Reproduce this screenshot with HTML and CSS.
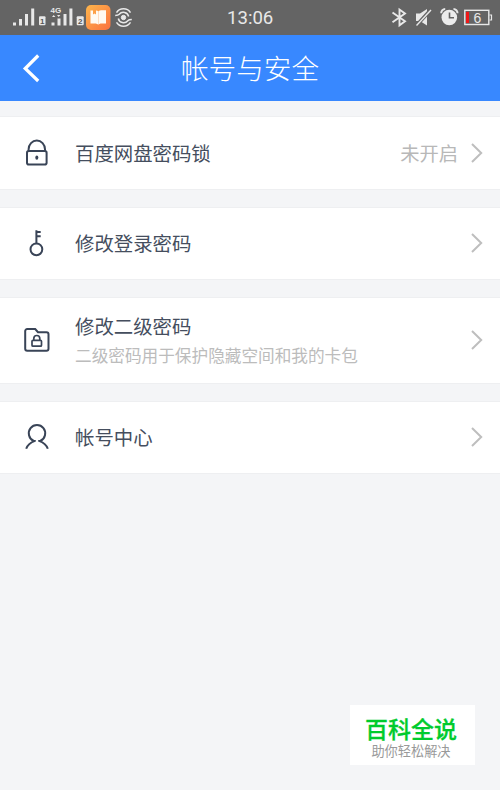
FILE: index.html
```html
<!DOCTYPE html>
<html lang="zh-CN">
<head>
<meta charset="utf-8">
<title>帐号与安全</title>
<link rel="stylesheet" href="styles.css">
</head>
<body>
<div class="status">
  <svg class="status-left" width="140" height="35" viewBox="0 0 140 35">
    <g fill="#e8e8e8">
      <rect x="13" y="22.5" width="3" height="3"/><rect x="19" y="19" width="3" height="6.5"/><rect x="25" y="14" width="3" height="11.5"/><rect x="31.2" y="8.5" width="3" height="17"/>
      <rect x="39" y="16.3" width="6.5" height="9" rx="1"/>
      <rect x="51.5" y="22.5" width="3" height="3"/><rect x="57.5" y="18.5" width="3" height="7"/><rect x="63.5" y="14" width="3" height="11.5"/><rect x="69.4" y="8.5" width="3" height="17"/>
      <rect x="76.7" y="16.3" width="7" height="9" rx="1"/>
      <path d="M52 17l1.7-2 1.7 2zM57 15h3.4l-1.7 2z"/>
    </g>
    <text class="net" x="50.5" y="12.8">4G</text>
    <text class="sim" x="40" y="24">1</text><text class="sim" x="78" y="24">2</text>
    <defs><linearGradient id="orange" x2="1" y2="1"><stop stop-color="#fdb64c"/><stop offset="1" stop-color="#fb713e"/></linearGradient></defs>
    <rect x="86" y="5" width="24.5" height="25" rx="5" fill="url(#orange)"/>
    <path d="M90.500 10.500h2.500v4l1.500-1 1.500 1v-4q1.600 0 2.400 1 1-1.200 3-1.200h4.600v13.200h-5.500l-2.300 1-2.300-1h-5.400z" fill="#fffaf2"/>
    <path d="M98.500 11.500v12.500" stroke="#fdc7a0" stroke-width=".6"/>
    <g fill="none" stroke="#e8e8e8" stroke-width="1.500">
      <circle cx="123.500" cy="17.500" r="2.200" fill="#e8e8e8" stroke-width="1"/>
      <path d="M116.500 12.700a8.300 8.300 0 0 1 14 0M116.500 22.300a8.300 8.300 0 0 0 14 0M115.200 15.500q3 0 4-1.200a5.400 5.400 0 0 1 9.500 2.200M131.800 19.500q-3 0-4 1.200a5.400 5.400 0 0 1-9.500-2.200"/>
    </g>
  </svg>
  <time class="clock">13:06</time>
  <svg class="status-right" width="120" height="35" viewBox="380 0 120 35">
    <path d="M392.500 12.500l12.500 8.800-5.500 4V9.500l5.500 4-12.500 8.800" fill="none" stroke="#e8e8e8" stroke-width="1.900"/>
    <path d="M416 13.500h4l7-4.500v16.500l-7-4.500h-4z" fill="#e8e8e8"/>
    <path d="M416 26l14.500-16" stroke="#646464" stroke-width="3.500"/>
    <path d="M416.500 25.500L431 10" stroke="#e8e8e8" stroke-width="1.400"/>
    <circle cx="449.300" cy="17.500" r="7.800" fill="#ececec"/>
    <path d="M441.200 13.200a4 4 0 0 1 4-4.100M453.500 9.100a4 4 0 0 1 4 4.100" fill="none" stroke="#e8e8e8" stroke-width="2"/>
    <path d="M449.500 12.500v5.300h4.500" fill="none" stroke="#646464" stroke-width="1.600"/>
    <rect x="464.800" y="10.300" width="24" height="14.200" fill="none" stroke="#e8e8e8" stroke-width="1.400"/>
    <path d="M489.500 15h2v5h-2" fill="none" stroke="#e8e8e8" stroke-width="1.200"/>
    <path d="M466 11.800h3V23h-3z" fill="#f01818"/>
    <text class="charge" x="473.500" y="22.700">6</text>
  </svg>
</div>
<header class="header">
  <svg class="back" width="20" height="30" viewBox="0 0 20 30"><path d="M17.200 2.500L4.200 15.500l13 12.500" fill="none" stroke="#fff" stroke-width="3.200"/></svg>
  <h1 class="title">帐号与安全</h1>
</header>
<main class="list">
  <section class="row">
    <svg class="icon" width="28" height="30" viewBox="0 0 28 30"><g fill="none" stroke="#394457" stroke-width="2"><rect x="4" y="13" width="19.600" height="13.500" rx="1.800"/><path d="M5.600 13v-1.700a8.200 8.800 0 0 1 16.400 0V13"/></g><ellipse cx="13.800" cy="19.600" rx="1.500" ry="2.200" fill="#394457"/></svg>
    <div class="label">百度网盘密码锁</div>
    <span class="state">未开启</span>
    <svg class="arrow" width="12" height="22" viewBox="0 0 12 22"><path d="M1 2l9.200 9L1 20"/></svg>
  </section>
  <section class="row">
    <svg class="icon" width="28" height="30" viewBox="0 0 28 30"><g fill="none" stroke="#394457" stroke-width="2"><circle cx="13.400" cy="21.300" r="5.900"/><path d="M13.400 15.400V2.300M13.400 4.100h4.300M13.400 8.300h4.300"/></g></svg>
    <div class="label">修改登录密码</div>
    <svg class="arrow" width="12" height="22" viewBox="0 0 12 22"><path d="M1 2l9.200 9L1 20"/></svg>
  </section>
  <section class="row tall">
    <svg class="icon" width="28" height="30" viewBox="0 0 28 30"><g fill="none" stroke="#394457" stroke-width="2"><path d="M4.200 4h8l2.800 3.200h8.500a2 2 0 0 1 2 2v14.500a2 2 0 0 1-2 2H4.200a2 2 0 0 1-2-2V6a2 2 0 0 1 2-2z"/><rect x="9" y="15.300" width="9.500" height="5.900" rx="1" stroke-width="1.700"/><path d="M10.800 15v-1.500a3 3 0 0 1 6 0V15" stroke-width="1.700"/></g></svg>
    <div class="label">修改二级密码<p class="note">二级密码用于保护隐藏空间和我的卡包</p></div>
    <svg class="arrow" width="12" height="22" viewBox="0 0 12 22"><path d="M1 2l9.200 9L1 20"/></svg>
  </section>
  <section class="row">
    <svg class="icon" width="28" height="30" viewBox="0 0 28 30"><path d="M3.200 26.700c1.200-3.500 4-6.100 8.800-7.800l-1.500-.2a8.200 8.200 0 1 1 7 0l-1.500.2c4.800 1.700 7.600 4.300 8.800 7.800" fill="none" stroke="#394457" stroke-width="2" stroke-linejoin="round"/></svg>
    <div class="label">帐号中心</div>
    <svg class="arrow" width="12" height="22" viewBox="0 0 12 22"><path d="M1 2l9.200 9L1 20"/></svg>
  </section>
</main>
<aside class="badge">
  <strong class="badge-name">百科全说</strong>
  <span class="badge-note">助你轻松解决</span>
</aside>
</body>
</html>
```
FILE: styles.css
```css
* { box-sizing: border-box; }
body {
  margin: 0;
  height: 790px;
  overflow: hidden;
  background: #f4f5f7;
  color: #454e5e;
  font-family: "Noto Sans CJK SC", sans-serif;
}
.status {
  height: 35px;
  background: #646464;
  display: grid;
  grid-template-columns: 140px 1fr 120px;
  align-items: center;
}
.status svg { display: block; }
.clock {
  color: #e8e8e8;
  font: 18.6px/33px Roboto, sans-serif;
  padding: 2px 0 0 87px;
}
.net { font: 700 8px "Liberation Sans", sans-serif; fill: #e8e8e8; }
.sim { font: 700 8px "Liberation Sans", sans-serif; fill: #555; }
.charge { font: 14px "Liberation Sans", sans-serif; fill: #e8e8e8; }
.header {
  height: 66px;
  background: #3888ff;
  display: grid;
  grid-template-columns: 48px 1fr 48px;
  align-items: center;
  color: #fff;
}
.back { margin-left: 21px; }
.title {
  margin: 0;
  text-align: center;
  font-size: 27.6px;
  font-weight: 300;
  line-height: 64px;
  padding-bottom: 2px;
}
.list {
  padding-top: 15px;
  display: flex;
  flex-direction: column;
  gap: 17px;
}
.row {
  height: 73.5px;
  background: #fff;
  border: solid #eeeff1;
  border-width: 1px 0;
  display: flex;
  align-items: center;
  padding: 0 17px 0 23px;
}
.tall { height: 86.5px; }
.icon { flex: none; margin-right: 24px; }
.label {
  flex: 1;
  font-size: 19.4px;
  line-height: 28px;
  font-weight: 400;
}
.note {
  margin: 1px 0 0;
  font-size: 16.65px;
  line-height: 28px;
  font-weight: 400;
  color: #bcbcbc;
}
.state { font-size: 19.3px; line-height: 28px; color: #b8b8b8; font-weight: 400; margin-right: 13px; }
.arrow { fill: none; stroke: #bebebe; stroke-width: 2; }
.badge {
  position: absolute;
  left: 350px;
  top: 705px;
  width: 125px;
  height: 60px;
  background: #fff;
  display: flex;
  flex-direction: column;
  align-items: center;
  padding: 9px 3px 0 0;
}
.badge-name { font-size: 23px; line-height: 29px; font-weight: 500; -webkit-text-stroke: .3px #00cb2d; color: #00cb2d; }
.badge-note { font-size: 13.2px; line-height: 16px; color: #999; }
```
